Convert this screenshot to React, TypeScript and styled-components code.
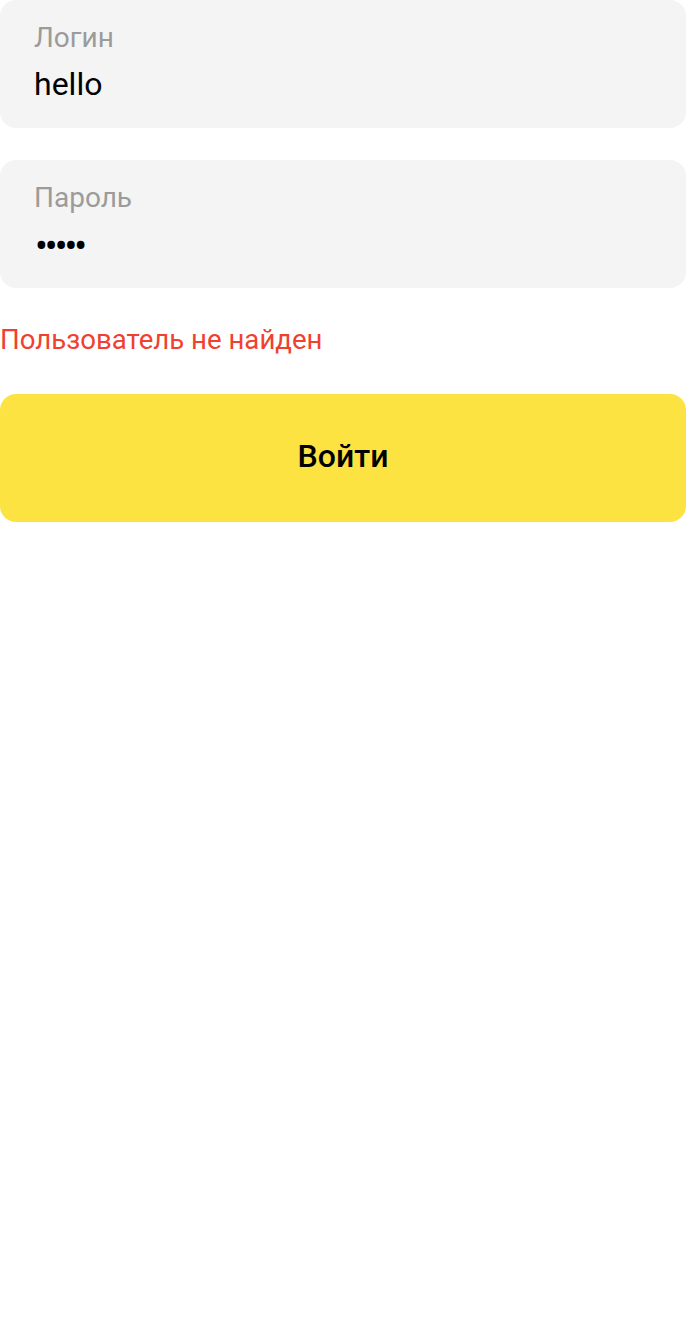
import React from "react";
import styled, { createGlobalStyle } from "styled-components";

const Global = createGlobalStyle`
  html, body { margin: 0; padding: 0; background: #ffffff; }
  body { font-family: Roboto, "Noto Sans", sans-serif; }
`;

const Page = styled.div`
  width: 686px;
  display: flex;
  flex-direction: column;
`;

const Field = styled.div<{ $mb: number }>`
  height: 128px;
  box-sizing: border-box;
  background: #f4f4f4;
  border-radius: 16px;
  padding: 22px 34px 0;
  margin-bottom: ${(p) => p.$mb}px;
  display: flex;
  flex-direction: column;
`;

const Label = styled.div`
  font-size: 28px;
  line-height: 32px;
  color: #9b9b9b;
`;

const Value = styled.div`
  font-size: 32px;
  line-height: 40px;
  margin-top: 10px;
  color: #000;
`;

const Dots = styled.div`
  font-size: 38px;
  line-height: 40px;
  margin-top: 12px;
  padding-left: 1px;
  color: #000;
  letter-spacing: -3px;
`;

const Error = styled.div`
  font-size: 27.6px;
  line-height: 32px;
  color: #f1402f;
  margin-top: 36px;
  margin-bottom: 38px;
`;

const Button = styled.button`
  height: 128px;
  border: none;
  border-radius: 16px;
  background: #fde341;
  font-family: Roboto, "Noto Sans", sans-serif;
  font-size: 32px;
  font-weight: 500;
  color: #000;
  padding: 0 0 4px;
`;

export default function App() {
  return (
    <Page>
      <Global />
      <Field $mb={32}>
        <Label>Логин</Label>
        <Value>hello</Value>
      </Field>
      <Field $mb={0}>
        <Label>Пароль</Label>
        <Dots>•••••</Dots>
      </Field>
      <Error>Пользователь не найден</Error>
      <Button>Войти</Button>
    </Page>
  );
}
